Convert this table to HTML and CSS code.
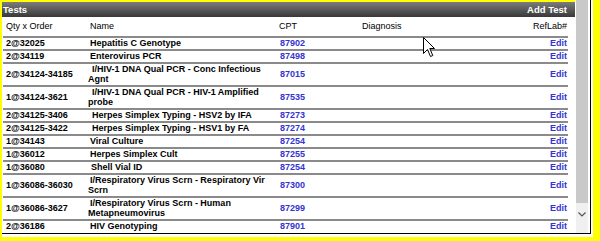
FILE: index.html
```html
<!DOCTYPE html>
<html>
<head>
<meta charset="utf-8">
<link rel="stylesheet" href="styles.css">
</head>
<body>
<div class="frame">
  <div class="box">
    <div class="main">
      <div class="bar"><span>Tests</span><span>Add Test</span></div>
      <table class="tests">
        <colgroup><col class="w-qty"><col class="w-name"><col class="w-cpt"><col class="w-diag"><col></colgroup>
        <thead>
          <tr><th class="c-qty">Qty x Order</th><th class="c-name">Name</th><th class="c-cpt">CPT</th><th class="c-diag">Diagnosis</th><th class="c-ref">RefLab#</th></tr>
        </thead>
        <tbody>
          <tr><td class="c-qty">2@32025</td><td class="c-name">Hepatitis C Genotype</td><td class="c-cpt">87902</td><td></td><td class="c-ref">Edit</td></tr>
          <tr><td class="c-qty">2@34119</td><td class="c-name">Enterovirus PCR</td><td class="c-cpt">87498</td><td></td><td class="c-ref">Edit</td></tr>
          <tr><td class="c-qty">2@34124-34185</td><td class="c-name ind">I/HIV-1 DNA Qual PCR - Conc Infectious Agnt</td><td class="c-cpt">87015</td><td></td><td class="c-ref">Edit</td></tr>
          <tr><td class="c-qty">1@34124-3621</td><td class="c-name ind">I/HIV-1 DNA Qual PCR - HIV-1 Amplified probe</td><td class="c-cpt">87535</td><td></td><td class="c-ref">Edit</td></tr>
          <tr><td class="c-qty">2@34125-3406</td><td class="c-name ind">Herpes Simplex Typing - HSV2 by IFA</td><td class="c-cpt">87273</td><td></td><td class="c-ref">Edit</td></tr>
          <tr><td class="c-qty">2@34125-3422</td><td class="c-name ind">Herpes Simplex Typing - HSV1 by FA</td><td class="c-cpt">87274</td><td></td><td class="c-ref">Edit</td></tr>
          <tr><td class="c-qty">1@34143</td><td class="c-name">Viral Culture</td><td class="c-cpt">87254</td><td></td><td class="c-ref">Edit</td></tr>
          <tr><td class="c-qty">1@36012</td><td class="c-name">Herpes Simplex Cult</td><td class="c-cpt">87255</td><td></td><td class="c-ref">Edit</td></tr>
          <tr><td class="c-qty">1@36080</td><td class="c-name mid">Shell Vial ID</td><td class="c-cpt">87254</td><td></td><td class="c-ref">Edit</td></tr>
          <tr><td class="c-qty">1@36086-36030</td><td class="c-name">I/Respiratory Virus Scrn - Respiratory Vir Scrn</td><td class="c-cpt">87300</td><td></td><td class="c-ref">Edit</td></tr>
          <tr><td class="c-qty">1@36086-3627</td><td class="c-name">I/Respiratory Virus Scrn - Human Metapneumovirus</td><td class="c-cpt">87299</td><td></td><td class="c-ref">Edit</td></tr>
          <tr class="last"><td class="c-qty">2@36186</td><td class="c-name">HIV Genotyping</td><td class="c-cpt">87901</td><td></td><td class="c-ref">Edit</td></tr>
        </tbody>
      </table>
    </div>
    <div class="scroll">
      <div class="thumb"></div>
      <div class="track">
        <svg class="chev" width="8" height="5" viewBox="0 0 8 5"><path d="M0.5 0.5 L4 4 L7.5 0.5" fill="none" stroke="#555" stroke-width="1.2"/></svg>
      </div>
    </div>
  </div>
  <svg class="cursor" width="13" height="21" viewBox="0 0 13 21"><path d="M0.5 0.5 L0.5 16.5 L4.5 12.5 L7.5 19.5 L9.8 18.5 L6.8 11.5 L11.5 11.5 Z" fill="#fff" stroke="#000" stroke-width="1" stroke-linejoin="miter"/></svg>
</div>
</body>
</html>
```
FILE: styles.css
```css
* { box-sizing: border-box; }
body {
  margin: 0;
  font-family: "Liberation Sans", Arial, sans-serif;
  background: #fff;
}
.frame {
  position: relative;
  width: 600px;
  height: 241px;
  border-left: 2px solid #ffff00;
  border-right: 7px solid #ffff00;
  border-bottom: 4px solid #ffff00;
  padding: 0 2px 3px 0;
  background: #fff;
}
.box {
  display: flex;
  height: 100%;
  border-right: 1px solid #000;
  border-bottom: 1px solid #000;
}
.main {
  width: 573px;
  margin-right: 1px;
  border-top: 2px solid #ffff00;
  overflow: hidden;
}
.bar {
  height: 15px;
  background: linear-gradient(to bottom, #7c7c7c 0%, #5a5a5a 50%, #383838 100%);
  color: #fff;
  font-weight: bold;
  font-size: 9.5px;
  display: flex;
  justify-content: space-between;
  align-items: center;
  padding: 0 8px 0 1px;
}
.tests {
  margin-left: 1px;
  width: 565px;
  table-layout: fixed;
  border-collapse: separate;
  border-spacing: 0;
  font-size: 9px;
  color: #000;
}
.w-qty { width: 85px; }
.w-name { width: 190px; }
.w-cpt { width: 83px; }
.w-diag { width: 110px; }
.tests th {
  height: 21px;
  font-weight: normal;
  text-align: left;
  vertical-align: middle;
  border-bottom: 2px solid #8a8a8a;
  padding: 0 0 1px 0;
  white-space: nowrap;
}
.tests td {
  line-height: 10px;
  font-weight: bold;
  vertical-align: middle;
  border-bottom: 2px solid #8a8a8a;
  padding: 0 0 1px 0;
}
.tests tr.last td { border-bottom: none; }
.tests .c-qty { padding-left: 3px; }
.tests th.c-name { padding-left: 2px; }
.tests td.c-name { padding-right: 8px; text-indent: 2px; }
.tests td.c-name.ind { text-indent: 4px; }
.tests td.c-name.mid { text-indent: 3px; }
.tests th.c-cpt { padding-left: 1px; }
.tests td.c-cpt { padding-left: 2px; color: #3434d2; }
.tests th.c-diag { padding-left: 1px; }
.tests .c-ref { text-align: right; padding-right: 1px; }
.tests td.c-ref { color: #3434d2; }
.scroll {
  width: 12px;
  display: flex;
  flex-direction: column;
  background: #f0f0f0;
}
.thumb {
  height: 203px;
  background: #c9c9c9;
}
.track { flex: 1; }
.chev {
  display: block;
  margin: 9px 0 0 2px;
}
.cursor {
  position: absolute;
  left: 421px;
  top: 37px;
}
```
